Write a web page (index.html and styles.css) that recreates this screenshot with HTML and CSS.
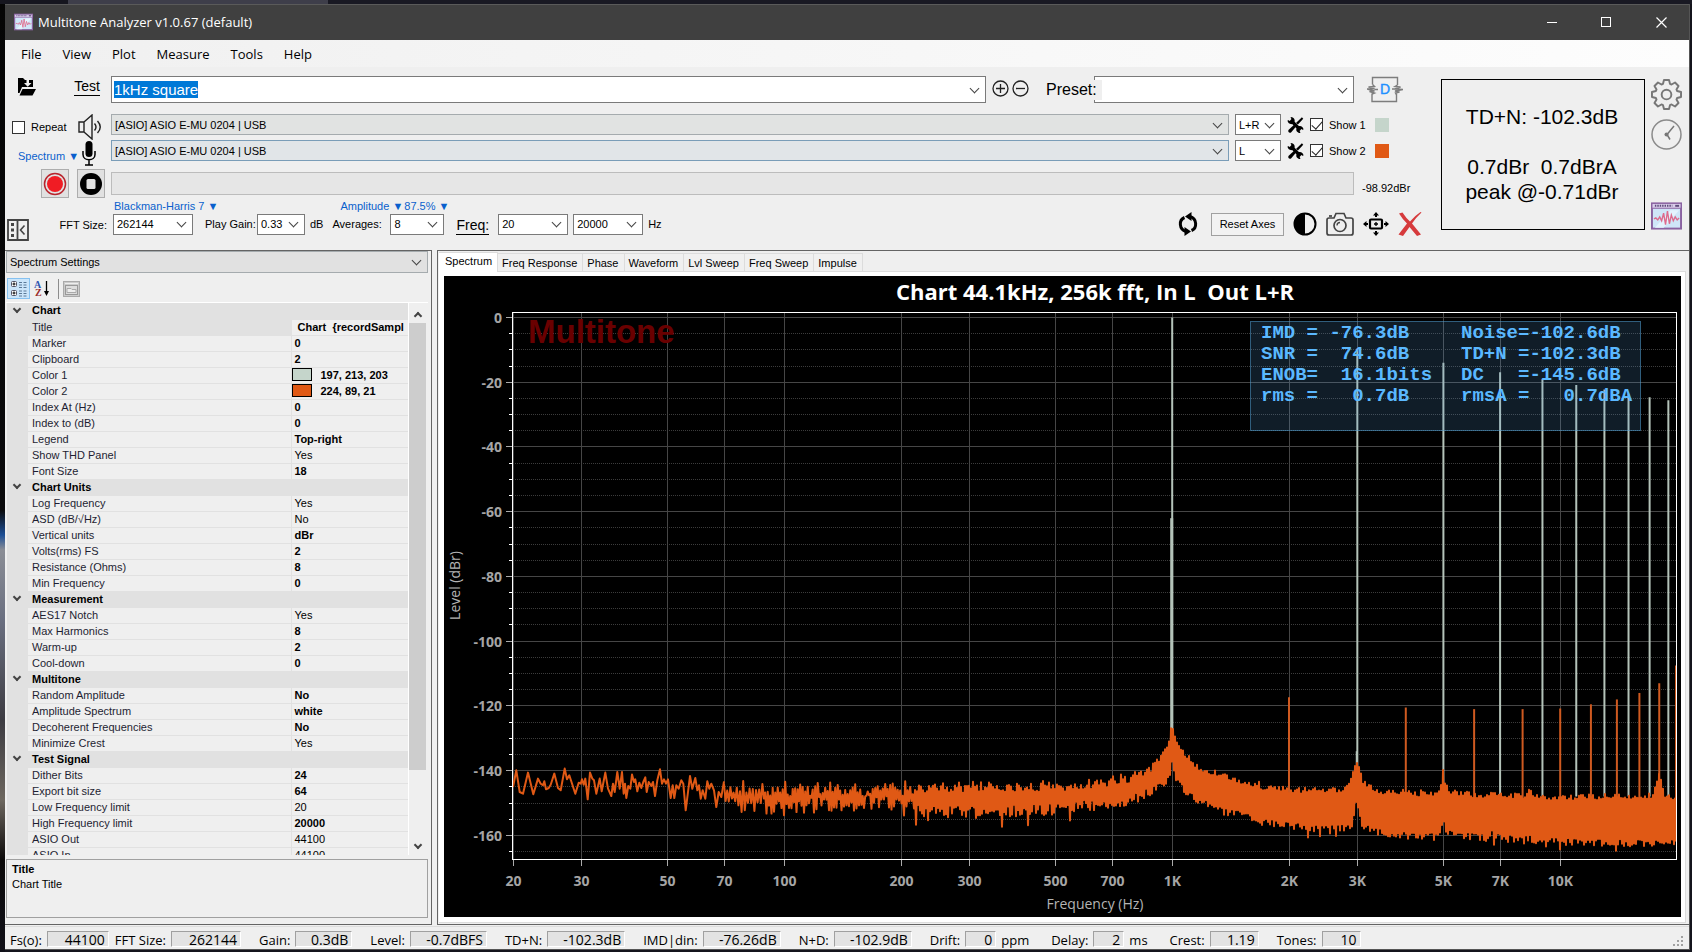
FILE: index.html
```html
<!DOCTYPE html>
<html lang="en">
<head>
<meta charset="utf-8">
<title>Multitone Analyzer v1.0.67 (default)</title>
<link rel="stylesheet" href="styles.css">
</head>
<body>
<svg class="defs" width="0" height="0" aria-hidden="true">
  <symbol id="i-app" viewBox="0 0 32 28">
    <rect x="1" y="1" width="30" height="26" fill="#cfe6f8" stroke="#8a62a0" stroke-width="2"/>
    <path d="M4 26 20 8h9L13 26z" fill="#e4f3fd"/>
    <rect x="1" y="1" width="30" height="5" fill="#d9cdea" stroke="#8a62a0" stroke-width="1"/>
    <path d="M4 3.500h18" stroke="#5c4a78" stroke-width="2" stroke-dasharray="1.5 1"/>
    <path d="M25 3.500h4" stroke="#5c4a78" stroke-width="2"/>
    <path d="M3 17l2-1 2 2 2-3 2 4 2-8 2 12 2-14 2 13 2-9 2 6 2-4 2 3 2-2" fill="none" stroke="#dd6a8c" stroke-width="1.4"/>
  </symbol>
  <symbol id="i-tools" viewBox="0 0 18 18">
    <path d="M4.500 4.500l9 9" stroke="#000" stroke-width="3.400"/>
    <path d="M.5 4.600 4.200.500c2.800.2 4.500 2.600 3.800 4.900L5.500 8C3.200 8.500.900 7 .5 4.600zM17.500 13.500 13.800 17.500c-2.900-.2-4.500-2.400-3.800-4.800l2.500-2.500c2.300-.8 4.600.9 5 3.300z"/>
    <path d="M.2 3.200 3.200.200l1.500 2.500L2.800 4.800z" fill="#efefef"/>
    <path d="M17.800 14.800l-3 3-1.500-2.500 2-2z" fill="#efefef"/>
    <path d="M15.800.900l1.400 1.400-5.600 6.200L9.500 6.800z"/>
    <path d="M7.200 9l2 2-4.700 5.700c-1.800 1.600-4.300-.7-2.700-2.600z"/>
  </symbol>
</svg>
<div class="window">
  <header class="titlebar">
    <svg class="app-small"><use href="#i-app"/></svg>
    <h1>Multitone Analyzer v1.0.67 (default)</h1>
    <button aria-label="Minimize"><svg width="10" height="10"><path d="M0 5.500h10" stroke="#fff"/></svg></button>
    <button aria-label="Maximize"><svg width="11" height="11"><rect x=".5" y=".5" width="9" height="9" fill="none" stroke="#fff"/></svg></button>
    <button aria-label="Close"><svg width="11" height="11"><path d="M.5.500l10 10M10.500.500l-10 10" stroke="#fff" stroke-width="1.200"/></svg></button>
  </header>
  <nav class="menu">
    <button>File</button><button>View</button><button>Plot</button><button>Measure</button><button>Tools</button><button>Help</button>
  </nav>

  <section class="toolbar">
    <div class="side">
      <div class="side-row open">
        <button class="icon" aria-label="Open test"><svg width="18" height="18" viewBox="0 0 18 18"><path d="M0 0h5l2 2h8v7H4L1.500 15H0z"/><path d="M4.500 11H18l-3.500 6.500H1.500z"/><path d="M6 5h2.500V1H11v4h2.500L9.700 8.800z" fill="#efefef"/></svg></button>
        <button class="caption" id="test-label">Test</button>
      </div>
      <div class="side-row repeat">
        <label><input type="checkbox"> Repeat</label>
        <svg width="24" height="26" viewBox="0 0 24 26" fill="none" stroke="#222" stroke-width="1.400"><path d="M1 8h5v10H1zM6 8l8-7v24l-8-7M16.500 9.500q3 3.500 0 7M19.500 7q5.500 6 0 12"/></svg>
      </div>
      <div class="side-row mode">
        <button class="link">Spectrum ▼</button>
        <svg width="14" height="25" viewBox="0 0 14 25"><rect x="3.500" width="7" height="16" rx="3.500"/><path d="M1 10v3.500c0 7 12 7 12 0V10M7 19v5M3 24h8" fill="none" stroke="#000" stroke-width="1.500"/></svg>
      </div>
      <div class="side-row transport">
        <button class="square" aria-label="Record"><svg width="24" height="24"><circle cx="12" cy="12" r="10.500" fill="none" stroke="#b8232c" stroke-width="1.500"/><circle cx="12" cy="12" r="8" fill="#f01c24"/></svg></button>
        <button class="square" aria-label="Stop"><svg width="24" height="24"><circle cx="12" cy="12" r="11"/><rect x="7.500" y="7" width="9" height="10" rx="1.500" fill="#e1e1e1"/></svg></button>
      </div>
      <div class="side-row fft">
        <button class="icon" aria-label="Collapse settings"><svg width="22" height="22"><path d="M1 1h20v20H1zM10.500 1v20" fill="none" stroke="#444" stroke-width="1.800"/><path d="M4 4h3v3H4zM4 9.500h3v3H4zM4 15h3v3H4z" fill="#444"/><path d="M17.500 6.500 13.500 11l4 4.500" fill="none" stroke="#444" stroke-width="1.600"/></svg></button>
        <label for="fft">FFT Size:</label>
      </div>
    </div>

    <div class="main">
      <div class="row test">
        <div class="combo grow big"><input type="text" id="test" aria-labelledby="test-label" value="1kHz square"></div>
        <button class="icon add" aria-label="Add test"><svg width="17" height="17"><circle cx="8.500" cy="8.500" r="7.500" fill="none" stroke="#222" stroke-width="1.300"/><path d="M4 8.500h9M8.500 4v9" stroke="#222" stroke-width="1.300"/></svg></button>
        <button class="icon del" aria-label="Remove test"><svg width="17" height="17"><circle cx="8.500" cy="8.500" r="7.500" fill="none" stroke="#222" stroke-width="1.300"/><path d="M4 8.500h9" stroke="#222" stroke-width="1.300"/></svg></button>
        <label class="preset" for="preset">Preset:</label>
        <div class="combo big preset-box"><select id="preset"><option></option></select></div>
        <button class="icon distort" aria-label="Distortion"><svg width="36" height="27" viewBox="0 0 36 27"><path d="M5.500 8.500V1.500h25V9M29.500 17.500v8H5v-8" fill="none" stroke="#7d7d7d" stroke-width="1.400"/><path d="M5.500 8.500l2 2-6 .5 6 1.500-7.500.500 7.500 2-5 .5 5 1.500L5 18M7.500 13.500H11M30.500 9l-2.500 1.500 5.500.500-5.500 2 8 .500-8 1.500 4.500 1-4 1 1 1.500M25 13h3" fill="none" stroke="#7d7d7d" stroke-width="1.400"/><text x="18" y="18" text-anchor="middle" class="d-letter">D</text></svg></button>
      </div>
      <div class="row device">
        <div class="combo grow gray"><select aria-label="Output device"><option>[ASIO] ASIO E-MU 0204 | USB</option></select></div>
        <div class="combo chan"><select aria-label="Output channel"><option>L+R</option></select></div>
        <button class="icon" aria-label="Output settings"><svg width="17" height="18"><use href="#i-tools"/></svg></button>
        <label class="show"><input type="checkbox" checked> Show 1</label>
        <button class="swatch one" aria-label="Color 1"></button>
      </div>
      <div class="row device second">
        <div class="combo grow gray hot"><select aria-label="Input device"><option>[ASIO] ASIO E-MU 0204 | USB</option></select></div>
        <div class="combo chan"><select aria-label="Input channel"><option>L</option></select></div>
        <button class="icon" aria-label="Input settings"><svg width="17" height="18"><use href="#i-tools"/></svg></button>
        <label class="show"><input type="checkbox" checked> Show 2</label>
        <button class="swatch two" aria-label="Color 2"></button>
      </div>
      <div class="row level">
        <div class="progress" role="progressbar" aria-label="Progress"></div>
        <span class="db">-98.92dBr</span>
      </div>
      <div class="row links">
        <button class="link">Blackman-Harris 7 ▼</button>
        <button class="link amp">Amplitude ▼</button>
        <button class="link pct">87.5% ▼</button>
      </div>
      <div class="row params">
        <div class="combo w80"><select id="fft"><option>262144</option></select></div>
        <label class="lead" for="gain">Play Gain:</label>
        <div class="combo w48"><select id="gain"><option>0.33</option></select></div>
        <span class="unit">dB</span>
        <label class="avg" for="avg">Averages:</label>
        <div class="combo w54"><select id="avg"><option>8</option></select></div>
        <button class="caption freq" id="freq">Freq:</button>
        <div class="combo w70"><select aria-labelledby="freq"><option>20</option></select></div>
        <div class="combo w70 to"><select aria-label="Maximum frequency"><option>20000</option></select></div>
        <span class="unit">Hz</span>
        <div class="actions">
          <button class="icon" aria-label="Refresh"><svg width="20" height="24" viewBox="0 0 20 24"><path d="M8 19.500C1 17.500.500 8 6.500 5.500M12 4.500c7 2 7.500 11.500 1.500 14" fill="none" stroke="#000" stroke-width="3"/><path d="M13.500 0v9L7 4.500zM6.500 15v9l6.500-4.500z"/></svg></button>
          <button class="reset">Reset Axes</button>
          <button class="icon" aria-label="Contrast"><svg width="24" height="24"><circle cx="12" cy="12" r="10.500" fill="#efefef" stroke="#000" stroke-width="2"/><path d="M12 1.500a10.500 10.500 0 0 0 0 21z"/></svg></button>
          <button class="icon" aria-label="Snapshot"><svg width="28" height="24" viewBox="0 0 28 24" fill="none" stroke="#444" stroke-width="1.700"><path d="M3 6h5l2-4.500h8L20 6h5q2 0 2 2v13q0 2-2 2H3q-2 0-2-2V8q0-2 2-2z"/><circle cx="14" cy="13.500" r="6"/><path d="M11 13.500q0-3 3-3" stroke-width="1.300"/><path d="M3 4h3"/></svg></button>
          <button class="icon" aria-label="Fit view"><svg width="26" height="24" viewBox="0 0 26 24"><rect x="7" y="7.500" width="12" height="9" rx="1" fill="none" stroke="#000" stroke-width="2.200"/><path d="M13 10v4M11 12h4" stroke="#000" stroke-width="1.300"/><path d="M13 0l3 3.500h-2V5h-2V3.500h-2zM13 24l3-3.500h-2V19h-2v1.500h-2zM0 12l3.500-3v2H5v2H3.500v2zM26 12l-3.500-3v2H21v2h1.500v2z"/></svg></button>
          <button class="icon" aria-label="Clear"><svg width="24" height="24" viewBox="0 0 24 24"><path d="M1 1.500 4.500.500Q8 6 12 9.500 16.500 4 22.500 0l1 .5Q17.500 6 14 11.500l9 11-4 1.500-7.500-9L5 24 .500 22.500 9 11.500Q4 6.500 1 1.500z" fill="#d63a3c"/></svg></button>
        </div>
      </div>
    </div>

    <output class="readout">TD+N: -102.3dB<br><br>0.7dBr&nbsp; 0.7dBrA<br>peak @-0.71dBr</output>
    <div class="rail">
      <button class="icon" aria-label="Settings"><svg width="31" height="31" viewBox="-16 -16 32 32" fill="none" stroke="#777" stroke-width="2" stroke-linejoin="round"><path d="M11-3.600 15-2.600V2.600L11 3.600 10.300 5.200 12.400 8.800 8.800 12.400 5.200 10.300 3.600 11 2.600 15H-2.600L-3.600 11-5.200 10.300-8.800 12.400-12.400 8.800-10.300 5.200-11 3.600-15 2.600V-2.600L-11-3.600-10.300-5.200-12.400-8.800-8.800-12.400-5.200-10.300-3.600-11-2.600-15H2.600L3.600-11 5.200-10.300 8.800-12.400 12.400-8.800 10.300-5.200z"/><circle r="5"/></svg></button>
      <button class="icon" aria-label="History"><svg width="31" height="31"><circle cx="15.500" cy="15.500" r="14.500" fill="none" stroke="#8a8a8a" stroke-width="1.500"/><path d="M23 7l-7 8.500 3 5" fill="none" stroke="#777" stroke-width="1.500"/><circle cx="15.500" cy="15.500" r="2" fill="#777"/></svg></button>
      <button class="icon last" aria-label="Analyzer"><svg width="31" height="28"><use href="#i-app"/></svg></button>
    </div>
  </section>

  <main class="work">
    <aside class="settings">
      <div class="combo gray section"><select aria-label="Settings section"><option>Spectrum Settings</option></select></div>
      <div class="grid-tools">
        <button class="on" aria-label="Categorized"><svg width="18" height="17"><g fill="#fff" stroke="#556" ><rect x="1.500" y="1.500" width="5" height="5" rx="1"/><rect x="1.500" y="10.500" width="5" height="5" rx="1"/></g><path d="M2.500 4h3M4 2.500v3M2.500 13h3M4 11.500v3" stroke="#000"/><path d="M9 2.500h3M9 5h3M9 7.500h3M9 11h3M9 13.500h3M9 16h3M13.500 2.500h3M13.500 5h3M13.500 7.500h3M13.500 11h3M13.500 13.500h3M13.500 16h3" stroke="#5a7896"/></svg></button>
        <button aria-label="Alphabetical"><svg width="18" height="20"><text x="0" y="9" class="az-a">A</text><text x="1" y="17" class="az-z">Z</text><path d="M12.500 2v13" stroke="#000" stroke-width="1.300"/><path d="M10 12h5l-2.500 5z"/></svg></button>
        <i></i>
        <button aria-label="Property pages"><svg width="17" height="16"><rect x=".5" y=".5" width="16" height="15" fill="#ccc" stroke="#aaa"/><rect x="2.500" y="4.500" width="12" height="9" fill="#ddd" stroke="#999"/><path d="M4 7.500h4l1 1h4v3H4z" fill="#eee" stroke="#aaa"/><path d="M2 2.500h13" stroke="#eee"/></svg></button>
      </div>
      <div class="grid-wrap">
        <div class="grid-view">
          <table class="props">
            <colgroup><col class="c-gutter"><col class="c-name"><col></colgroup>
            <tbody>
            <tr class="cat top"><td><i></i></td><th colspan="2">Chart</th></tr>
            <tr class="sel"><td></td><td>Title</td><td class="b">&nbsp;Chart&nbsp; {recordSampl</td></tr>
            <tr><td></td><td>Marker</td><td class="b">0</td></tr>
            <tr><td></td><td>Clipboard</td><td class="b">2</td></tr>
            <tr><td></td><td>Color 1</td><td class="b color"><span class="chip one"></span>197, 213, 203</td></tr>
            <tr><td></td><td>Color 2</td><td class="b color"><span class="chip two"></span>224, 89, 21</td></tr>
            <tr><td></td><td>Index At (Hz)</td><td class="b">0</td></tr>
            <tr><td></td><td>Index to (dB)</td><td class="b">0</td></tr>
            <tr><td></td><td>Legend</td><td class="b">Top-right</td></tr>
            <tr><td></td><td>Show THD Panel</td><td>Yes</td></tr>
            <tr><td></td><td>Font Size</td><td class="b">18</td></tr>
            <tr class="cat"><td><i></i></td><th colspan="2">Chart Units</th></tr>
            <tr><td></td><td>Log Frequency</td><td>Yes</td></tr>
            <tr><td></td><td>ASD (dB/√Hz)</td><td>No</td></tr>
            <tr><td></td><td>Vertical units</td><td class="b">dBr</td></tr>
            <tr><td></td><td>Volts(rms) FS</td><td class="b">2</td></tr>
            <tr><td></td><td>Resistance (Ohms)</td><td class="b">8</td></tr>
            <tr><td></td><td>Min Frequency</td><td class="b">0</td></tr>
            <tr class="cat"><td><i></i></td><th colspan="2">Measurement</th></tr>
            <tr><td></td><td>AES17 Notch</td><td>Yes</td></tr>
            <tr><td></td><td>Max Harmonics</td><td class="b">8</td></tr>
            <tr><td></td><td>Warm-up</td><td class="b">2</td></tr>
            <tr><td></td><td>Cool-down</td><td class="b">0</td></tr>
            <tr class="cat"><td><i></i></td><th colspan="2">Multitone</th></tr>
            <tr><td></td><td>Random Amplitude</td><td class="b">No</td></tr>
            <tr><td></td><td>Amplitude Spectrum</td><td class="b">white</td></tr>
            <tr><td></td><td>Decoherent Frequencies</td><td class="b">No</td></tr>
            <tr><td></td><td>Minimize Crest</td><td>Yes</td></tr>
            <tr class="cat"><td><i></i></td><th colspan="2">Test Signal</th></tr>
            <tr><td></td><td>Dither Bits</td><td class="b">24</td></tr>
            <tr><td></td><td>Export bit size</td><td class="b">64</td></tr>
            <tr><td></td><td>Low Frequency limit</td><td>20</td></tr>
            <tr><td></td><td>High Frequency limit</td><td class="b">20000</td></tr>
            <tr><td></td><td>ASIO Out</td><td>44100</td></tr>
            <tr><td></td><td>ASIO In</td><td>44100</td></tr>
            </tbody>
          </table>
        </div>
        <div class="scroll"><i class="up"></i><b></b><i class="down"></i></div>
      </div>
      <div class="help"><strong>Title</strong><p>Chart Title</p></div>
    </aside>

    <section class="charts">
      <div class="tabs" role="tablist">
        <button role="tab" aria-selected="true" class="active">Spectrum</button><button role="tab">Freq Response</button><button role="tab">Phase</button><button role="tab">Waveform</button><button role="tab">Lvl Sweep</button><button role="tab">Freq Sweep</button><button role="tab">Impulse</button>
      </div>
      <div class="page">
        <div class="chart">
          <svg id="plot"></svg>
          <div class="legend">
            <pre>IMD = -76.3dB
SNR =  74.6dB
ENOB=  16.1bits
rms =   0.7dB</pre>
            <pre>Noise=-102.6dB
TD+N =-102.3dB
DC   =-145.6dB
rmsA =   0.7dBA</pre>
          </div>
        </div>
      </div>
    </section>
  </main>

  <footer class="status">
    <span>Fs(o):</span><output class="s62">44100</output>
    <span class="near">FFT Size:</span><output class="s70">262144</output>
    <span>Gain:</span><output class="s56">0.3dB</output>
    <span>Level:</span><output class="s76">-0.7dBFS</output>
    <span>TD+N:</span><output class="s78">-102.3dB</output>
    <span>IMD|din:</span><output class="s78">-76.26dB</output>
    <span>N+D:</span><output class="s78">-102.9dB</output>
    <span>Drift:</span><output class="s30">0</output><span class="after">ppm</span>
    <span>Delay:</span><output class="s30">2</output><span class="after">ms</span>
    <span>Crest:</span><output class="s50">1.19</output>
    <span>Tones:</span><output class="s38">10</output>
    <svg class="grip" width="12" height="12" fill="#a0a0a0"><path d="M8 0h2v2H8zM4 4h2v2H4zM8 4h2v2H8zM0 8h2v2H0zM4 8h2v2H4zM8 8h2v2H8z"/></svg>
  </footer>
</div>
<script src="chart.js"></script>
</body>
</html>
```

FILE: styles.css
```css
* { box-sizing: border-box; }
html, body { height: 100%; margin: 0; }
body {
  overflow: hidden;
  padding: 4px 2px 2px 5px;
  font: 11px/14px "Liberation Sans", Arial, sans-serif;
  color: #000;
  background:
    linear-gradient(90deg, #16161f 68px, #3e3e4a 68px, #3e3e4a 328px, #191923 328px) 0 0 / 100% 4px no-repeat,
    linear-gradient(#050505 0, #0a0a0c 510px, #1d4f96 535px, #8b8e96 550px, #6a6f80 620px, #3d3c42 720px, #6d675f 800px, #0b0909 860px, #101018) 0 0 / 5px 100% no-repeat,
    #14141c;
}
button, select, input { font: inherit; color: inherit; margin: 0; }
button { background: none; border: 0; padding: 0; }
svg { display: block; flex: none; }
.defs { position: absolute; }

.window {
  display: flex;
  flex-direction: column;
  height: 100%;
  background: #efefef;
  border-right: 1px solid #555;
  border-bottom: 1px solid #555;
}

.titlebar {
  display: flex;
  align-items: center;
  height: 36px;
  flex: none;
  padding: 0 0 1px 9px;
  background: #404040;
  border-top: 1px solid #5a5a5a;
  color: #fff;
}
.titlebar h1 { flex: 1; margin: 0 0 0 5px; font: 13px/18px "Open Sans", sans-serif; }
.titlebar button { display: grid; place-items: center; width: 55px; height: 100%; }
.app-small { width: 19px; height: 18px; }

.menu {
  display: flex;
  gap: 21px;
  height: 27px;
  flex: none;
  padding: 1px 0 0 16px;
  background: linear-gradient(90deg, #f0f0f0, #fdfdfd);
  font: 13px/27px "Open Sans", sans-serif;
}

.toolbar { display: flex; flex: none; padding: 9px 7px 9px 0; }
.side { width: 106px; flex: none; }
.side-row { display: flex; align-items: center; justify-content: space-between; }
.open { height: 21px; padding: 0 11px 0 13px; }
.caption { font-size: 14px; line-height: 17px; border-bottom: 1px solid #000; }
.repeat { height: 26px; margin-top: 17px; padding: 0 9px 0 7px; }
.repeat label, .show { display: flex; align-items: center; gap: 6px; }
.mode { height: 25px; margin-top: 1px; padding: 0 15px 0 13px; }
.link { color: #0a5fcd; white-space: pre; }
.mode .link { padding-top: 4px; }
.transport { justify-content: flex-end; gap: 8px; height: 29px; margin-top: 3px; padding-right: 6px; }
.square { display: grid; place-items: center; width: 28px; height: 29px; background: #e1e1e1; border: 1px solid #adadad; }
.fft { align-items: flex-start; height: 27px; margin-top: 16px; padding: 0 4px 0 2px; }
.fft .icon { padding-top: 5px; }
.fft label { line-height: 22px; }

input[type="checkbox"] {
  appearance: none;
  display: grid;
  place-items: center;
  width: 13px;
  height: 13px;
  flex: none;
  border: 1px solid #333;
  background: #fff;
}
input[type="checkbox"]:checked::before {
  content: "";
  width: 9px;
  height: 5px;
  border: solid #222;
  border-width: 0 0 1px 1px;
  transform: translateY(-1px) rotate(-48deg);
}

.main { flex: 1; min-width: 0; padding-right: 31px; }
.row { display: flex; align-items: center; white-space: nowrap; }
.test { height: 27px; }
.device { height: 21px; margin-top: 11px; }
.device.second { margin-top: 5px; }
.level { height: 23px; margin-top: 11px; }
.links { height: 14px; margin-top: 4px; padding-left: 3px; }
.params { height: 22px; padding-left: 2px; }
.grow { flex: 1; min-width: 0; }

.combo { position: relative; height: 21px; border: 1px solid #7a7a7a; background: #fff; }
.combo::after {
  content: "";
  position: absolute;
  right: 7px;
  top: 50%;
  width: 6px;
  height: 6px;
  border: solid #444;
  border-width: 0 1px 1px 0;
  transform: translateY(-5px) rotate(45deg);
  pointer-events: none;
}
.combo select, .combo input {
  appearance: none;
  display: block;
  width: 100%;
  height: 100%;
  padding: 0 0 0 3px;
  border: 0;
  outline: 0;
  border-radius: 0;
  background: none;
}
.combo.big { height: 27px; font-size: 15px; }
.combo.big input { padding: 0 24px 0 2px; }
.combo input::selection { background: #0078d7; color: #fff; }
.combo.gray { background: #e1e3e2; border-color: #a5abae; }
.combo.hot { background: #e1e5e8; border-color: #7a9db8; }

.add { margin-left: 6px; }
.del { margin-left: 3px; }
.add, .del { padding-bottom: 3px; }
.preset {
  position: relative;
  z-index: 1;
  width: 56px;
  margin-left: 17px;
  margin-right: -8px;
  background: #efefef;
  font-size: 16px;
  line-height: 20px;
}
.preset-box { width: 260px; }
.distort { margin: 0 7px 0 13px; }
.d-letter { font: 14px "Liberation Sans", sans-serif; fill: #1e90ff; stroke: #1e90ff; stroke-width: .4px; }

.chan { width: 46px; margin: 0 6px; }
.show { margin-left: 6px; width: 65px; }
.swatch { width: 14px; height: 14px; margin-right: 21px; }
.one { background: #c5d5cb; }
.two { background: #e05915; }
.progress { flex: 1; height: 23px; background: #e6e6e6; border: 1px solid #bcbcbc; }
.db { width: 55px; margin-left: 8px; margin-right: -7px; padding-top: 8px; }
.amp { margin-left: 122px; }
.pct { margin-left: 1px; }

.w80 { width: 80px; }
.w48 { width: 48px; }
.w54 { width: 54px; }
.w70 { width: 70px; }
.lead { margin-left: 12px; width: 52px; }
.unit { margin-left: 5px; }
.avg { margin-left: 9px; width: 58px; }
.freq { margin: 3px 9px 0 12px; }
.to { margin-left: 5px; }
.actions { display: flex; align-items: center; gap: 9px; margin-left: auto; margin-right: -12px; }
.actions .icon:first-child { margin-right: 4px; }
.reset { width: 73px; height: 23px; background: #f2f2f2; border: 1px solid #a0a0a0; }

.readout {
  display: block;
  width: 204px;
  height: 151px;
  margin-top: 3px;
  padding: 24px 2px 0 0;
  flex: none;
  border: 1px solid #000;
  text-align: center;
  font-size: 21px;
  line-height: 25px;
}
.rail { display: flex; flex-direction: column; gap: 9px; padding: 3px 0 0 6px; }
.rail .last { margin-top: 43px; }

.work { display: flex; flex: 1; min-height: 0; gap: 5px; }
.settings {
  display: flex;
  flex-direction: column;
  width: 427px;
  flex: none;
  padding: 0 3px 6px 1px;
  border: solid #646464;
  border-width: 1px 1px 1px 0;
}
.section { height: 22px; flex: none; border-color: #a5a5a5; }
.section.gray { background: #e1e1e1; }
.grid-tools { display: flex; align-items: center; gap: 1px; padding: 5px 1px 3px 1px; border-bottom: 1px solid #fff; }
.grid-tools button { display: grid; place-items: center; height: 21px; width: 23px; }
.grid-tools .on { background: #cbe5fa; border: 1px solid #86c1f0; }
.grid-tools i { width: 1px; height: 20px; background: #8c8c8c; margin: 0 0 0 3px; }
.az-a { font: bold 10px "Liberation Serif", serif; fill: #2f55b0; }
.az-z { font: bold 10px "Liberation Serif", serif; fill: #9c2c2c; }

.grid-wrap { display: flex; flex: 1; min-height: 0; padding-left: 1px; }
.grid-view { flex: 1; min-width: 0; overflow: hidden; }
.props { width: 100%; table-layout: fixed; border-collapse: collapse; }
.c-gutter { width: 21px; }
.c-name { width: 263px; }
.props td, .props th {
  height: 16px;
  padding: 0 0 0 4px;
  border-bottom: 1px solid #e1e1e1;
  font-weight: normal;
  line-height: 15px;
  text-align: left;
  white-space: nowrap;
  overflow: hidden;
}
.props td:first-child { background: #e1e1e1; padding: 0 5px; }
.props td:nth-child(2) { color: #1e1e32; }
.props td:nth-child(3) { border-left: 1px solid #e1e1e1; padding-left: 3px; }
.props .b, .props th { font-weight: bold; }
.cat td, .cat th, .props .sel td:nth-child(2) { background: #e1e1e1; }
.cat td, .cat th { border-top: 1px solid #a0a0a0; }
.props .top td, .props .top th { border-top: 0; }
.cat i, .up, .down {
  display: block;
  width: 6px;
  height: 6px;
  border: solid #444;
  border-width: 0 2px 2px 0;
  transform: translateY(-2px) rotate(45deg);
}
.cat i { margin-left: 2px; }
.props tr td.color { padding-left: 0; }
.chip { display: inline-block; width: 20px; height: 13px; margin-right: 9px; border: 1px solid #000; vertical-align: top; }
.scroll { display: flex; flex-direction: column; align-items: center; width: 18px; margin-right: 2px; border-left: 1px solid #fff; }
.scroll b { width: 100%; flex: 0 0 81%; background: #cdcdcd; }
.scroll .up { flex: none; margin: 7px 0; transform: translateY(3px) rotate(225deg); }
.scroll .down { flex: none; margin: auto 0 5px; }
.help { height: 59px; flex: none; margin-top: 4px; padding: 2px 5px; border: 1px solid #a0a0a0; line-height: 15px; }
.help p { margin: 0; }

.charts { display: flex; flex-direction: column; flex: 1; min-width: 0; padding: 1px 3px 1px 1px; border: 1px solid #646464; border-right: 0; }
.tabs { display: flex; align-items: flex-end; height: 19px; flex: none; position: relative; }
.tabs button { height: 18px; padding: 0 5px 0 4px; border: solid #dcdcdc; border-width: 1px 1px 0 0; background: #f0f0f0; }
.tabs .active { height: 20px; margin-bottom: -1px; padding: 0 5px 3px 6px; background: #fff; }
.page { flex: 1; min-height: 0; padding: 4px 4px 5px 5px; background: #fff; border: solid #dcdcdc; border-width: 1px 1px 1px 0; display: flex; }
.chart { position: relative; flex: 1; min-width: 0; background: #000; overflow: hidden; }
#plot { position: absolute; width: 100%; height: 100%; }
.legend {
  position: absolute;
  top: 45px;
  right: 40px;
  display: grid;
  grid-template-columns: 200px 1fr;
  width: 391px;
  height: 110px;
  padding: 1px 0 0 10px;
  background: rgba(90, 160, 220, .18);
  border: 1px solid rgba(80, 160, 210, .5);
  color: #5ab8ff;
}
.legend pre { margin: 0; font: bold 19px/21px "Liberation Mono", monospace; }

.grid-major { stroke: #464646; }
.grid-minor { stroke: #3c3c3c; stroke-dasharray: 1 1; }
.frame { fill: none; stroke: #fff; }
.tick { stroke: #aaa; }
.tick-minor { stroke: #fff; }
.tick-label { font: bold 14px "Open Sans", sans-serif; fill: #a5a5a5; }
.axis-title { font: 14px "Open Sans", sans-serif; fill: #b4b4b4; }
.chart-title { font: bold 22px "Open Sans", sans-serif; fill: #fff; white-space: pre; }
.brand { font: bold 33px "Liberation Sans", sans-serif; fill: #6a0000; }
.tone { stroke: #b4c3b9; stroke-width: 2; }
.tone.wide { stroke-width: 3; }
.harmonic { stroke: #cf5a20; stroke-width: 2; }
.noise { fill: none; stroke: #e05915; stroke-width: 2; stroke-linejoin: round; }

.status { display: flex; height: 23px; flex: none; margin-top: 1px; padding: 4px 4px 0 5px; border-top: 1px solid #dcdcdc; font: 13px/18px "Open Sans", sans-serif; white-space: nowrap; }
.status span { margin-right: 5px; margin-left: 18px; }
.status span:first-child { margin-left: 0; }
.status .near { margin-left: 6px; }
.status .after { margin-left: 5px; margin-right: 4px; }
.status output { flex: none; height: 16px; padding-right: 3px; line-height: 16px; text-align: right; background: #e3e3e3; border: 1px solid; border-color: #a0a0a0 #fff #fff #a0a0a0; font-size: 14px; }
.s30 { width: 31px; }
.s38 { width: 39px; }
.s50 { width: 49px; }
.s56 { width: 57px; }
.s62 { width: 62px; }
.s70 { width: 70px; }
.s76 { width: 77px; }
.s78 { width: 78px; }
.grip { margin: 5px 0 0 auto; }
```

FILE: chart.js
```js
const svg = document.getElementById('plot');
const NS = 'http://www.w3.org/2000/svg';
const M = { left: 69, top: 36, right: 4, bottom: 58 };
const TOP_DB = 1.7, BOTTOM_DB = -167.3, F0 = 20, F1 = 20000;

/* Low-frequency trace: position along a 3492-unit axis, level in tenths of a dB below -140. */
const LOW = [
  25,95,35,45,45,110,55,115,70,52,86,117,100,70,108,85,115,90,119,78,124,102,132,98,138,88,149,55,160,98,168,105,
  180,40,187,72,194,60,212,115,222,82,228,85,232,72,237,88,242,70,249,132,256,52,263,70,268,75,275,115,285,70,
  291,108,302,52,310,100,320,122,325,85,330,110,338,50,345,100,352,50,357,115,361,85,365,128,371,92,377,100,
  382,58,388,80,392,72,398,108,404,82,410,98,416,80,422,66,426,110,432,80,440,92,445,80,451,122,458,75,466,42,
  472,85,478,72,484,85,490,72,498,128,504,90,509,128,515,90,522,100,530,75,536,85,543,165,550,110,556,62,
  563,100,572,68,578,105,583,90,588,130,594,105,602,130,608,78,614,100,620,85,628,105,635,155,642,110,650,125,658,78
];
/* Noise envelope on a 1164 x 547 plane: x, upper edge, lower edge. */
const ENV = [
  [211,472,494],[271,473,501],[330,474,495],[392,473,497],[412,475,502],[492,473,502],[547,473,499],[580,470,496],
  [600,468,493],[627,463,486],[642,453,477],[652,440,472],[657,425,462],[658,416,453],[660,417,453],[663,430,466],
  [667,438,472],[677,449,484],[687,460,488],[702,462,498],[727,472,502],[752,477,510],[774,479,513],[800,480,516],
  [832,479,516],[838,470,513],[842,458,503],[843,446,492],[845,455,498],[850,472,514],[867,482,520],[897,483,523],
  [923,484,523],[928,473,519],[930,458,508],[932,470,516],[936,481,521],[974,486,526],[979,478,522],[984,484,525],
  [1012,486,528],[1016,478,524],[1020,486,528],[1047,487,529],[1087,486,530],[1127,486,531],[1140,485,531],
  [1144,470,530],[1146,461,530],[1148,471,530],[1152,487,531],[1164,486,531]
];

function rng(seed) {
  return () => {
    seed = (seed * 1664525 + 1013904223) >>> 0;
    return seed / 4294967296;
  };
}
function add(name, attrs, text) {
  const el = document.createElementNS(NS, name);
  for (const k in attrs) el.setAttribute(k, attrs[k]);
  if (text) el.textContent = text;
  svg.appendChild(el);
  return el;
}
function edge(x) {
  let i = 1;
  while (i < ENV.length - 1 && ENV[i][0] < x) i++;
  const a = ENV[i - 1], b = ENV[i], t = (x - a[0]) / (b[0] - a[0]);
  return [a[1] + (b[1] - a[1]) * t, a[2] + (b[2] - a[2]) * t];
}
function draw() {
  svg.replaceChildren();
  const W = svg.clientWidth, H = svg.clientHeight;
  const x0 = M.left, x1 = W - M.right, y0 = M.top, y1 = H - M.bottom, w = x1 - x0, h = y1 - y0;
  const fx = f => x0 + Math.log10(f / F0) / Math.log10(F1 / F0) * w;
  const dy = d => y0 + (TOP_DB - d) / (TOP_DB - BOTTOM_DB) * h;
  const snap = v => Math.floor(v) + 0.5;
  const line = (cls, a, b, c, d) => add('line', { class: cls, x1: a, y1: b, x2: c, y2: d });

  for (let d = 0; d >= -165; d -= 5) {
    const y = snap(dy(d)), major = d % 20 === 0;
    line(major ? 'grid-major' : 'grid-minor', x0, y, x1, y);
    line(major ? 'tick' : 'tick-minor', x0 - (major ? 7 : 4), y, x0, y);
    if (major) add('text', { class: 'tick-label', x: x0 - 11, y: y + 5, 'text-anchor': 'end' }, String(d));
  }
  for (const f of [20, 30, 50, 70, 100, 200, 300, 500, 700, 1000, 2000, 3000, 5000, 7000, 10000]) {
    const x = snap(fx(f));
    line('grid-major', x, y0, x, y1);
    line('tick', x, y1, x, y1 + 7);
    add('text', { class: 'tick-label', x, y: y1 + 27, 'text-anchor': 'middle' }, f < 1000 ? String(f) : f / 1000 + 'K');
  }
  add('text', { class: 'brand', x: x0 + 15, y: y0 + 31 }, 'Multitone');

  for (let n = 1; n < 20; n += 2) {
    const x = fx(n * 1000);
    line('tone', x, dy(-20 * Math.log10(n)), x, dy(n === 1 ? -132 : -148));
  }
  line('tone wide', fx(1000) - 0.5, dy(-62), fx(1000) - 0.5, dy(-128));
  line('tone', fx(2990), dy(-134), fx(2990), dy(-140));
  [-117.3, -120.5, -121, -121, -120.8, -119.5, -118, -116, -113, -107.5].forEach((d, i) => {
    const x = Math.min(fx((i + 1) * 2000), x1 - 1);
    line('harmonic', x, dy(d), x, dy(-150));
  });

  let low = '';
  for (let i = 0; i < LOW.length; i += 2) {
    low += (i ? 'L' : 'M') + (x0 + (LOW[i] - 25) / 3492 * w).toFixed(1) + ' ' + dy(-140 - (LOW[i + 1] - 46) / 9.7).toFixed(1);
  }
  add('path', { class: 'noise', d: low });

  const rand = rng(77);
  let d = '', up = true;
  for (let x = 211; x < 1164; x += x < 250 ? 1.6 : x < 400 ? 1.25 : 1) {
    const [t, b] = edge(x), spread = x < 400 ? 15 : x < 640 ? 11 : 6;
    let y;
    if (up) y = t - 4 + rand() * spread;
    else y = b + 4 - rand() * (spread + 2);
    const r = rand();
    if (!up && r < 0.07) y += x < 640 ? 10 : 6;
    if (up && r < 0.06 && x < 1000) y -= 3;
    d += (d ? 'L' : 'M') + (x0 + x / 1164 * w).toFixed(1) + ' ' + (y0 + y / 547 * h).toFixed(1);
    up = !up;
  }
  add('path', { class: 'noise', d });

  add('rect', { class: 'frame', x: x0 - 0.5, y: y0 + 0.5, width: w, height: h });
  const mid = (x0 + x1) / 2;
  add('text', { class: 'chart-title', x: mid, y: 24, 'text-anchor': 'middle' }, 'Chart 44.1kHz, 256k fft, In L\u00a0 Out L+R');
  add('text', { class: 'axis-title', x: mid, y: y1 + 50, 'text-anchor': 'middle' }, 'Frequency (Hz)');
  add('text', { class: 'axis-title', 'text-anchor': 'middle', transform: `translate(16 ${(y0 + y1) / 2}) rotate(-90)` }, 'Level (dBr)');
}
draw();
new ResizeObserver(draw).observe(svg.parentElement);

const test = document.getElementById('test');
test.focus();
test.select();
```
